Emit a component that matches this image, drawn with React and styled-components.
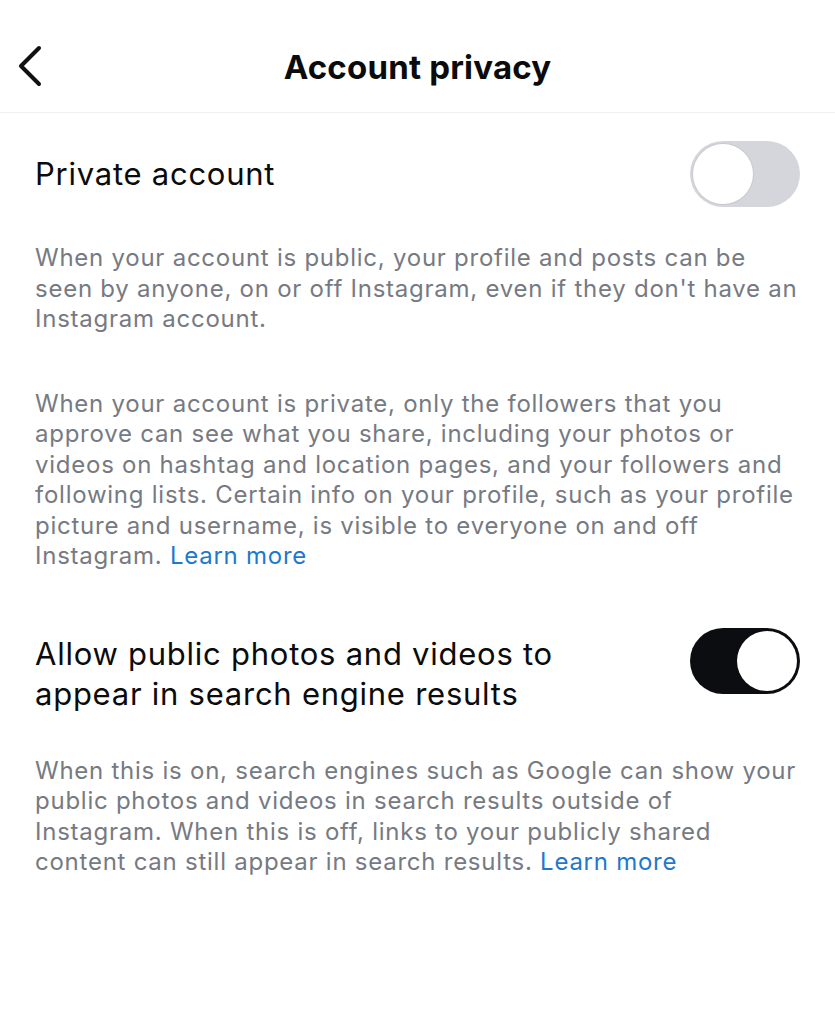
import React from 'react'
import styled, { createGlobalStyle } from 'styled-components'

const Global = createGlobalStyle`
  body {
    margin: 0;
    background: #fff;
    font-family: Inter, "Noto Sans", sans-serif;
    -webkit-font-smoothing: antialiased;
  }
`

const BackIcon = () =>
  <svg width="28" height="42" viewBox="0 0 28 42" fill="none">
    <path d="M24 3 L6 21 L24 39" stroke="#111" strokeWidth="4" strokeLinecap="round" strokeLinejoin="round" />
  </svg>

const Setting = ({ title, on, multi, children }) =>
  <S.Section>
    <S.Row>
      <S.Label $multi={multi}>{title}</S.Label>
      <S.Toggle $on={on}><S.Knob $on={on} /></S.Toggle>
    </S.Row>
    {children}
  </S.Section>

const App = () =>
  <S.Page>
    <Global />
    <S.Header>
      <S.Back><BackIcon /></S.Back>
      <S.Title>Account privacy</S.Title>
    </S.Header>

    <Setting title="Private account">
      <S.Text>
        When your account is public, your profile and posts can be seen by anyone, on or off Instagram, even if they don't have an Instagram account.
      </S.Text>
      <S.Text>
        When your account is private, only the followers that you approve can see what you share, including your photos or videos on hashtag and location pages, and your followers and following lists. Certain info on your profile, such as your profile picture and username, is visible to everyone on and off Instagram. <S.Link>Learn more</S.Link>
      </S.Text>
    </Setting>

    <Setting title={<>Allow public photos and videos to<br />appear in search engine results</>} on multi>
      <S.Text>
        When this is on, search engines such as Google can show your public photos and videos in search results outside of Instagram. When this is off, links to your publicly shared content can still appear in search results. <S.Link>Learn more</S.Link>
      </S.Text>
    </Setting>
  </S.Page>

const S = {
  Page: styled.div`
    width: 835px;
    min-height: 1024px;
    background: #fff;
  `,
  Header: styled.header`
    position: relative;
    height: 113px;
    box-sizing: border-box;
    padding-top: 22px;
    display: flex;
    align-items: center;
    justify-content: center;
    border-bottom: 1px solid #efefef;
  `,
  Back: styled.div`
    position: absolute;
    left: 15px;
    top: 45px;
    display: flex;
  `,
  Title: styled.h1`
    margin: 0;
    font-size: 33px;
    font-weight: 700;
    color: #0b0b0c;
    letter-spacing: 0.2px;
  `,
  Section: styled.section`
    padding: 28px 35px 0;
    & + & { padding-top: 2px; }
  `,
  Row: styled.div`
    display: flex;
    align-items: flex-start;
    justify-content: space-between;
    margin-bottom: 36px;
  `,
  Label: styled.div`
    padding: ${p => p.$multi ? '6px 0' : '13px 0'};
    font-size: 31px;
    line-height: 40px;
    letter-spacing: 0.75px;
    color: #0b0b0c;
  `,
  Toggle: styled.div`
    flex: none;
    width: 110px;
    height: 66px;
    border-radius: 33px;
    box-sizing: border-box;
    padding: 3px;
    display: flex;
    justify-content: ${p => p.$on ? 'flex-end' : 'flex-start'};
    background: ${p => p.$on ? '#0c0d10' : '#d4d6dc'};
  `,
  Knob: styled.div`
    width: 60px;
    height: 60px;
    border-radius: 50%;
    background: #fff;
    box-shadow: 0 0 0 1px ${p => p.$on ? '#0c0d10' : '#c8cad0'};
  `,
  Text: styled.p`
    margin: 0 0 54px;
    font-size: 24px;
    line-height: 30.5px;
    letter-spacing: 0.75px;
    color: #767a82;
  `,
  Link: styled.a`
    color: #1f78cb;
    cursor: pointer;
  `
}

export default App
